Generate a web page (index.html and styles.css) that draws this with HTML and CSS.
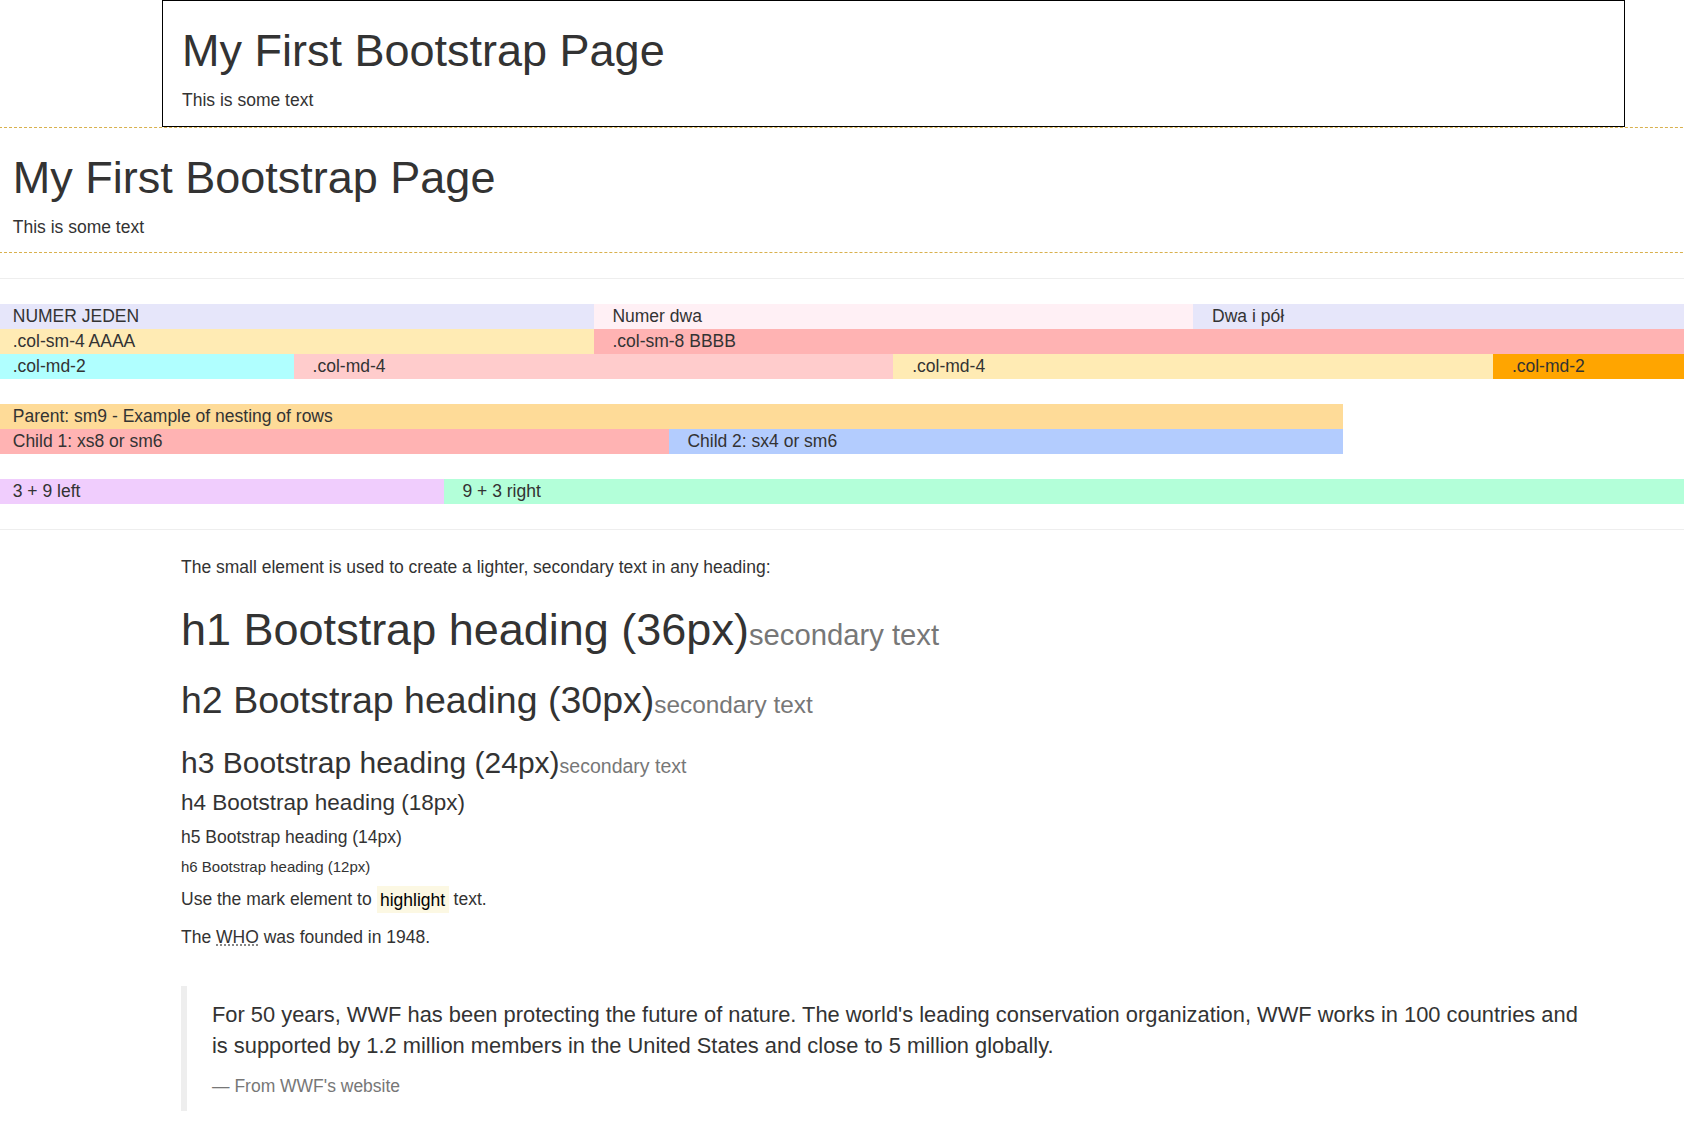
FILE: index.html
```html
<!DOCTYPE html>
<html lang="en">
<head>
<meta charset="utf-8">
<title>My First Bootstrap Page</title>
<link rel="stylesheet" href="styles.css">
</head>
<body>
<div class="page">
  <div class="container boxed">
    <h1>My First Bootstrap Page</h1>
    <p>This is some text</p>
  </div>
  <div class="fluid dashed">
    <h1>My First Bootstrap Page</h1>
    <p>This is some text</p>
  </div>
  <hr>
  <div class="grid">
    <div class="row">
      <div class="col w4 c-lavender">NUMER JEDEN</div>
      <div class="col w4 c-blush">Numer dwa</div>
      <div class="col w4 c-lavender">Dwa i pół</div>
    </div>
    <div class="row">
      <div class="col w4 c-cream">.col-sm-4 AAAA</div>
      <div class="col w8 c-rose">.col-sm-8 BBBB</div>
    </div>
    <div class="row">
      <div class="col w2 c-cyan">.col-md-2</div>
      <div class="col w4 c-pink">.col-md-4</div>
      <div class="col w4 c-cream">.col-md-4</div>
      <div class="col w2 c-orange">.col-md-2</div>
    </div>
    <div class="spacer"></div>
    <div class="row">
      <div class="col w9 c-sand">
        Parent: sm9 - Example of nesting of rows
        <div class="row nested">
          <div class="col w6 c-rose">Child 1: xs8 or sm6</div>
          <div class="col w6 c-blue">Child 2: sx4 or sm6</div>
        </div>
      </div>
    </div>
    <div class="spacer"></div>
    <div class="row">
      <div class="col w3 c-violet">3 + 9 left</div>
      <div class="col w9 c-mint">9 + 3 right</div>
    </div>
  </div>
  <hr>
  <div class="container">
    <p>The small element is used to create a lighter, secondary text in any heading:</p>
    <h1>h1 Bootstrap heading (36px)<small>secondary text</small></h1>
    <h2>h2 Bootstrap heading (30px)<small>secondary text</small></h2>
    <h3>h3 Bootstrap heading (24px)<small>secondary text</small></h3>
    <h4>h4 Bootstrap heading (18px)</h4>
    <h5>h5 Bootstrap heading (14px)</h5>
    <h6>h6 Bootstrap heading (12px)</h6>
    <p>Use the mark element to <mark>highlight</mark> text.</p>
    <p class="who">The <abbr title="World Health Organization">WHO</abbr> was founded in 1948.</p>
    <div class="spacer"></div>
    <blockquote>
      <p>For 50 years, WWF has been protecting the future of nature. The world's leading conservation organization, WWF works in 100 countries and is supported by 1.2 million members in the United States and close to 5 million globally.</p>
      <footer>From WWF's website</footer>
    </blockquote>
  </div>
</div>
</body>
</html>
```

FILE: styles.css
```css
* { box-sizing: border-box; }

html, body {
  margin: 0;
  padding: 0;
  background: #fff;
}

body {
  font-family: "Liberation Sans", Arial, Helvetica, sans-serif;
  font-size: 17.5px;
  line-height: 1.42857143;
  color: #333;
  overflow: hidden;
}

.page {
  width: 1799px;
  margin-left: -6px;
}

p { margin: 0 0 12.5px; }

h1, h2, h3, h4, h5, h6 {
  font-family: inherit;
  font-weight: 500;
  line-height: 1.1;
  color: inherit;
}

h1, h2, h3 { margin: 25px 0 12.5px; }
h4, h5, h6 { margin: 11.75px 0 11.75px; }

h1 { font-size: 45px; }
h2 { font-size: 37.5px; }
h3 { font-size: 30px; }
h4 { font-size: 22.5px; }
h5 { font-size: 17.5px; }
h6 { font-size: 15px; }

h1 small, h2 small, h3 small {
  font-size: 65%;
  font-weight: 400;
  line-height: 1;
  color: #777;
}

.container {
  width: 1462.5px;
  margin: 0 auto;
  padding: 0 18.75px;
}

.boxed { border: 1px solid #000; }

.fluid { padding: 0 18.75px; }

.dashed {
  border-top: 1px dashed #d9b14e;
  border-bottom: 1px dashed #d9b14e;
}

hr {
  height: 0;
  margin: 25px 0;
  border: 0;
  border-top: 1px solid #eee;
}

.row { display: flex; }

.col {
  padding: 0 18.75px;
  min-height: 1px;
}

.w2 { width: 16.66666667%; }
.w3 { width: 25%; }
.w4 { width: 33.33333333%; }
.w6 { width: 50%; }
.w8 { width: 66.66666667%; }
.w9 { width: 75%; }

.nested { margin: 0 -18.75px; }

.spacer { height: 25px; }

.who { margin-bottom: 11.5px; }

.c-lavender { background: #e6e6fa; }
.c-blush { background: #fff0f5; }
.c-cream { background: #ffebb4; }
.c-rose { background: #ffb3b3; }
.c-cyan { background: #b0ffff; }
.c-pink { background: #ffcccc; }
.c-orange { background: #ffa500; }
.c-sand { background: #fedb98; }
.c-blue { background: #b3ccfe; }
.c-violet { background: #f0cdfd; }
.c-mint { background: #b3ffd9; }

mark {
  padding: .2em;
  background: #fcf8e3;
  color: #000;
}

abbr {
  text-decoration: underline dotted #777;
  text-underline-offset: 2px;
  cursor: help;
}

blockquote {
  margin: 0 0 25px;
  padding: 12.5px 25px;
  font-size: 21.875px;
  border-left: 6.25px solid #eee;
}

blockquote footer {
  display: block;
  font-size: 80%;
  line-height: 1.42857143;
  color: #777;
}

blockquote footer::before {
  content: "\2014 \00A0";
}
```
